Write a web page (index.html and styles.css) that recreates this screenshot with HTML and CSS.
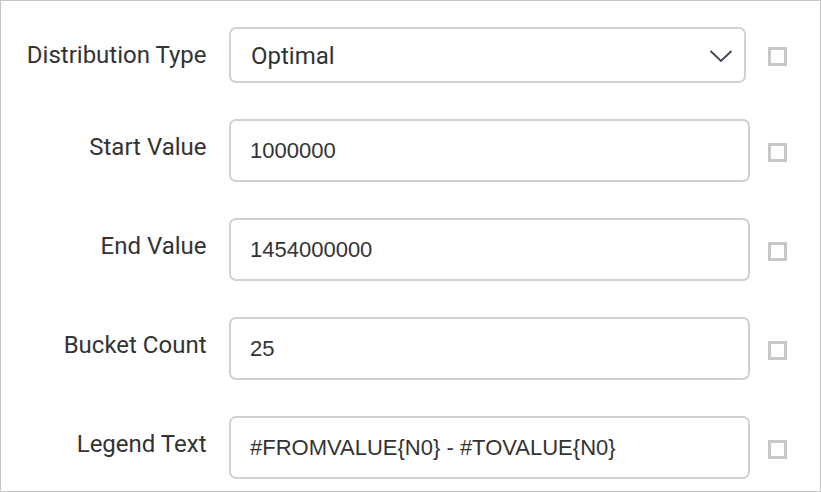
FILE: index.html
```html
<!DOCTYPE html>
<html>
<head>
<meta charset="utf-8">
<link rel="stylesheet" href="styles.css">
</head>
<body>
<div class="frame">
  <div class="row">
    <div class="label">Distribution Type</div>
    <div class="control">
      <div class="select">
        <span class="select-text">Optimal</span>
        <svg class="chev" width="24" height="14" viewBox="0 0 24 14"><path d="M1.5 2 L12 12 L22.5 2" fill="none" stroke="#3b4754" stroke-width="1.8"/></svg>
      </div>
    </div>
    <div class="check"></div>
  </div>
  <div class="row">
    <div class="label">Start Value</div>
    <div class="control"><div class="input">1000000</div></div>
    <div class="check"></div>
  </div>
  <div class="row">
    <div class="label">End Value</div>
    <div class="control"><div class="input">1454000000</div></div>
    <div class="check"></div>
  </div>
  <div class="row">
    <div class="label">Bucket Count</div>
    <div class="control"><div class="input">25</div></div>
    <div class="check"></div>
  </div>
  <div class="row">
    <div class="label">Legend Text</div>
    <div class="control"><div class="input">#FROMVALUE{N0} - #TOVALUE{N0}</div></div>
    <div class="check"></div>
  </div>
</div>
</body>
</html>
```

FILE: styles.css
```css
html, body {
  margin: 0;
  padding: 0;
  background: #fff;
}
.frame {
  box-sizing: border-box;
  width: 821px;
  height: 492px;
  border: 1px solid #c6c6c6;
  padding-top: 26px;
  display: flex;
  flex-direction: column;
  gap: 36px;
  overflow: hidden;
}
.row {
  display: grid;
  grid-template-columns: 205.5px 543.5px 38px;
  align-items: start;
}
.label {
  font-family: Roboto, "Noto Sans", sans-serif;
  font-size: 24px;
  color: #333;
  text-align: right;
  line-height: 56px;
  height: 56px;
}
.control {
  padding-left: 22.5px;
  box-sizing: border-box;
}
.select {
  box-sizing: border-box;
  width: 517px;
  height: 56px;
  border: 2px solid #d2d2d2;
  border-radius: 7px;
  display: flex;
  align-items: center;
  justify-content: space-between;
  padding: 2px 11px 0 20px;
}
.select-text {
  font-family: Roboto, "Noto Sans", sans-serif;
  font-size: 24px;
  color: #333;
}
.chev {
  display: block;
}
.input {
  box-sizing: border-box;
  width: 521px;
  height: 63px;
  border: 2px solid #d2d2d2;
  border-radius: 7px;
  display: flex;
  align-items: center;
  padding-left: 19px;
  font-family: "Liberation Sans", Arial, sans-serif;
  font-size: 22px;
  color: #333;
}
.check {
  box-sizing: border-box;
  width: 19px;
  height: 19px;
  border: 3px solid #c8c8c8;
  margin-left: 18px;
  align-self: center;
  margin-top: 3px;
}
```
